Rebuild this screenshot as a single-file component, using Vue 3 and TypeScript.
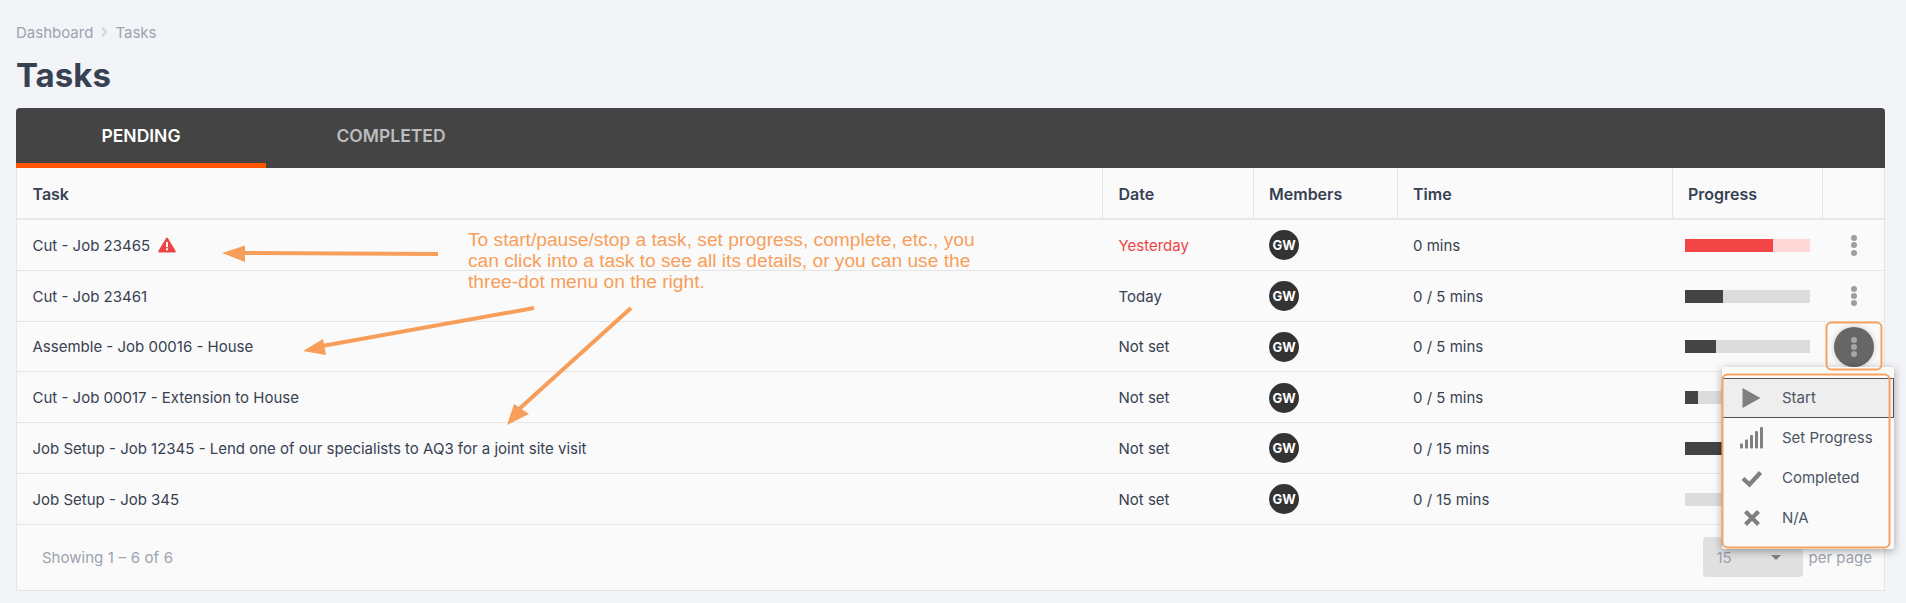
<script setup lang="ts">
interface Task {
  name: string
  date: string
  time: string
  progress: number
  overdue?: boolean
}

const columns = ['Task', 'Date', 'Members', 'Time', 'Progress', '']

const tasks: Task[] = [
  { name: 'Cut - Job 23465', date: 'Yesterday', time: '0 mins', progress: 70.4, overdue: true },
  { name: 'Cut - Job 23461', date: 'Today', time: '0 / 5 mins', progress: 30.4 },
  { name: 'Assemble - Job 00016 - House', date: 'Not set', time: '0 / 5 mins', progress: 24.8 },
  { name: 'Cut - Job 00017 - Extension to House', date: 'Not set', time: '0 / 5 mins', progress: 10.4 },
  { name: 'Job Setup - Job 12345 - Lend one of our specialists to AQ3 for a joint site visit', date: 'Not set', time: '0 / 15 mins', progress: 40 },
  { name: 'Job Setup - Job 345', date: 'Not set', time: '0 / 15 mins', progress: 0 },
]
</script>

<template>
  <div class="page">
    <nav class="crumbs">
      <span>Dashboard</span>
      <svg class="chev" width="8" height="10" viewBox="0 0 8 10"><path d="M2 1l4 4-4 4" fill="none" stroke="#d1d5db" stroke-width="2" /></svg>
      <span>Tasks</span>
    </nav>
    <h1 class="title">Tasks</h1>

    <section class="card">
      <div class="tabs">
        <div class="tab active">PENDING</div>
        <div class="tab">COMPLETED</div>
      </div>

      <div class="row head">
        <div v-for="c in columns" :key="c" class="cell">{{ c }}</div>
      </div>

      <div v-for="(t, i) in tasks" :key="t.name" class="row">
        <div class="cell name">
          <span>{{ t.name }}</span>
          <svg v-if="t.overdue" class="warn" width="18" height="16" viewBox="0 0 18 16">
            <path d="M9 1.5 L16.8 14.5 H1.2 Z" fill="#ef4444" stroke="#ef4444" stroke-width="2" stroke-linejoin="round" />
            <rect x="8" y="5" width="2" height="5.2" fill="#fff" />
            <rect x="8" y="11.3" width="2" height="2" fill="#fff" />
          </svg>
        </div>
        <div class="cell" :class="{ late: t.overdue }">{{ t.date }}</div>
        <div class="cell"><span class="avatar">GW</span></div>
        <div class="cell">{{ t.time }}</div>
        <div class="cell">
          <div class="bar" :class="{ red: t.overdue }">
            <div class="fill" :style="{ width: t.progress + '%' }"></div>
          </div>
        </div>
        <div class="cell actions">
          <span class="more" :class="{ open: i === 2 }"><i></i><i></i><i></i></span>
        </div>
      </div>

      <footer class="foot">
        <span class="showing">Showing 1 – 6 of 6</span>
        <div class="pager">
          <div class="select"><span>15</span><i class="caret"></i></div>
          <span class="per">per page</span>
        </div>
      </footer>

      <div class="menu">
        <div class="item hover">
          <svg width="24" height="24" viewBox="0 0 24 24"><path d="M2.500 2 L20.500 12 L2.500 22 Z" fill="#808080" /></svg>
          <span>Start</span>
        </div>
        <div class="item">
          <svg width="24" height="24" viewBox="0 0 24 24" fill="#808080">
            <rect x="0" y="17.5" width="3" height="5" rx="1" />
            <rect x="5" y="13.5" width="3" height="9" rx="1" />
            <rect x="10" y="9" width="3" height="13.5" rx="1" />
            <rect x="15" y="5" width="3" height="17.5" rx="1" />
            <rect x="20" y="1" width="3" height="21.5" rx="1" />
          </svg>
          <span>Set Progress</span>
        </div>
        <div class="item">
          <svg width="24" height="24" viewBox="0 0 24 24"><path d="M3 12.5 L9.5 18.5 L20.5 6.5" fill="none" stroke="#808080" stroke-width="4.4" /></svg>
          <span>Completed</span>
        </div>
        <div class="item">
          <svg width="24" height="24" viewBox="0 0 24 24"><path d="M5.5 5.5 L18.5 18.5 M18.5 5.5 L5.5 18.5" fill="none" stroke="#808080" stroke-width="4.2" /></svg>
          <span>N/A</span>
        </div>
      </div>
    </section>

    <!-- Annotations drawn on top of the screenshot -->
    <p class="note">To start/pause/stop a task, set progress, complete, etc., you can click into a task to see all its details, or you can use the three-dot menu on the right.</p>
    <svg class="overlay" width="1906" height="603" viewBox="0 0 1906 603">
      <g stroke="#f79f5a" stroke-width="4" fill="none">
        <path d="M438 254 L240 253" />
        <path d="M534 308 L322 346" />
        <path d="M631 308 L518 410" />
      </g>
      <g fill="#f79f5a">
        <path d="M222 253 L245 245.500 L245 262 Z" />
        <path d="M303 351 L323 339 L326 355 Z" />
        <path d="M507 425 L514 404 L529 414 Z" />
      </g>
      <g stroke="#f7a25f" stroke-width="2" fill="none">
        <rect x="1826.500" y="322.500" width="55" height="47" rx="5" />
        <rect x="1722.500" y="374.500" width="167" height="173" rx="5" />
      </g>
    </svg>
  </div>
</template>

<style>
html, body { margin: 0; background: #f3f4f8; }
</style>

<style scoped>
.page {
  position: relative;
  width: 1906px;
  height: 603px;
  overflow: hidden;
  box-sizing: border-box;
  padding: 22px 21px 0 16px;
  font-family: Inter, "Liberation Sans", sans-serif;
  font-size: 15px;
  color: #374151;
  background: #f3f4f8;
}
.crumbs {
  display: flex;
  align-items: center;
  gap: 7px;
  height: 20px;
  color: #9ca3af;
}
.title {
  margin: 16px 0 15px;
  height: 35px;
  font-size: 33px;
  line-height: 35px;
  font-weight: 700;
  color: #374151;
}
.card {
  position: relative;
  background: #fafafa;
  border-radius: 4px 4px 0 0;
  height: 482px;
  border: solid #e5e5e5;
  border-width: 0 1px 1px;
}
.tabs {
  display: flex;
  height: 60px;
  margin: 0 -1px;
  background: #444;
  border-radius: 4px 4px 0 0;
}
.tab {
  width: 250px;
  box-sizing: border-box;
  height: 60px;
  padding-bottom: 5px;
  display: flex;
  align-items: center;
  justify-content: center;
  font-size: 17.500px;
  font-weight: 600;
  color: #bdbdbd;
}
.tab.active {
  color: #fff;
  border-bottom: 5px solid #ff5500;
  padding-bottom: 0;
}
.row {
  display: grid;
  grid-template-columns: 1086px 150.500px 144px 275px 150px 1fr;
  height: 50.750px;
  box-sizing: border-box;
  padding-top: 1px;
  border-bottom: 1px solid #e5e5e5;
  align-items: center;
}
.row.head {
  height: 52px;
  padding-top: 0;
  border-bottom: 2px solid #e8e8e8;
  align-items: stretch;
  font-weight: 600;
  font-size: 16px;
}
.cell {
  padding-left: 15.500px;
  display: flex;
  align-items: center;
  min-width: 0;
  white-space: nowrap;
}
.head .cell {
  border-right: 1px solid #e5e5e5;
  padding-top: 1px;
}
.head .cell:last-child { border-right: 0; }
.warn { margin-left: 8px; }
.late { color: #ef4444; }
.avatar {
  width: 30px;
  height: 30px;
  border-radius: 50%;
  background: #333;
  color: #fff;
  font-size: 13px;
  font-weight: 700;
  display: flex;
  align-items: center;
  justify-content: center;
}
.bar {
  width: 125px;
  height: 13px;
  margin-left: -3.500px;
  background: #dcdcdc;
}
.bar.red { background: #fed7d7; }
.fill { height: 100%; background: #444; }
.bar.red .fill { background: #f24545; }
.actions { padding-left: 1px; justify-content: center; }
.more {
  width: 40px;
  height: 40px;
  border-radius: 50%;
  display: flex;
  flex-direction: column;
  align-items: center;
  justify-content: center;
  gap: 1.300px;
}
.more i {
  width: 6px;
  height: 6px;
  border-radius: 50%;
  background: #9e9e9e;
}
.more.open {
  background: #666;
  box-shadow: 0 0 6px rgba(0, 0, 0, 0.2);
}
.more.open i { background: #a6a6a6; }
.foot {
  height: 65px;
  display: flex;
  align-items: center;
  justify-content: space-between;
  padding: 0 12px 0 25px;
  color: #9ca3af;
}
.showing { word-spacing: 0.400px; }
.pager { display: flex; align-items: center; gap: 6px; }
.select {
  width: 100px;
  height: 40px;
  box-sizing: border-box;
  padding: 0 14px;
  display: flex;
  align-items: center;
  justify-content: space-between;
  background: #e0e0e0;
  border-radius: 4px;
}
.caret {
  width: 0;
  height: 0;
  margin-right: 8px;
  border: 5px solid transparent;
  border-top: 5px solid #808080;
  border-bottom: 0;
}
.menu {
  position: absolute;
  left: 1705px;
  top: 259px;
  width: 172px;
  height: 182px;
  box-sizing: border-box;
  padding-top: 10.500px;
  background: #fafafa;
  border-radius: 2px;
  box-shadow: 0 2px 8px rgba(0, 0, 0, 0.35);
}
.item {
  height: 40px;
  box-sizing: border-box;
  display: flex;
  align-items: center;
  padding-left: 18px;
  gap: 18px;
  color: #4b5563;
}
.item.hover {
  background: #eee;
  border: solid #555;
  border-width: 1px 1px 1px 0;
}
.note {
  position: absolute;
  left: 468px;
  top: 229px;
  width: 525px;
  margin: 0;
  font-family: "Liberation Sans", Arial, sans-serif;
  font-size: 19.200px;
  line-height: 21px;
  color: #f79f5a;
}
.overlay {
  position: absolute;
  left: 0;
  top: 0;
  pointer-events: none;
}
</style>
